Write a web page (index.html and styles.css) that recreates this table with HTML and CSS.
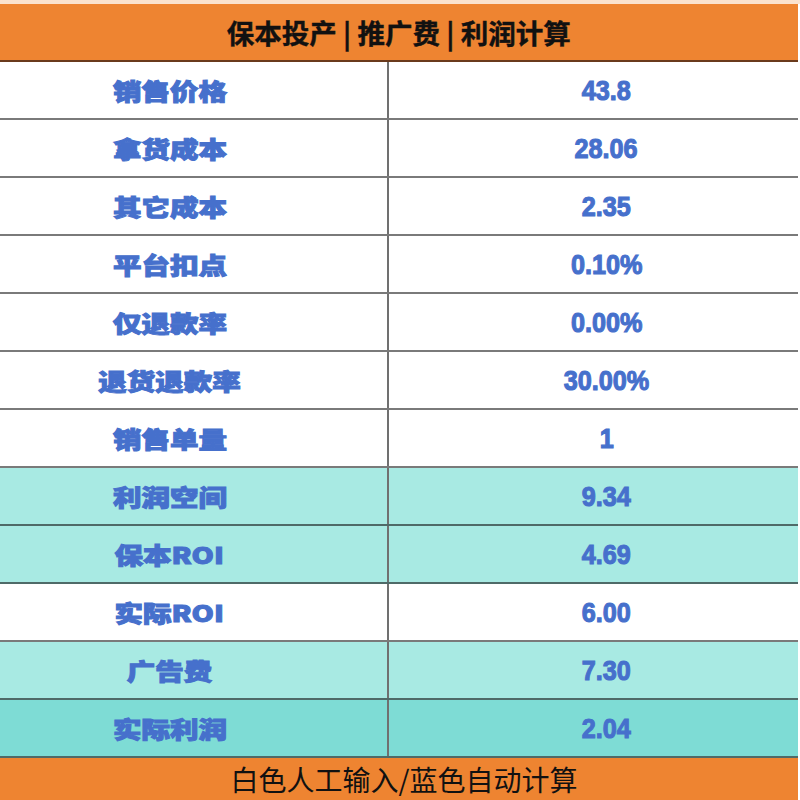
FILE: index.html
```html
<!DOCTYPE html>
<html lang="zh">
<head>
<meta charset="utf-8">
<title>保本投产 | 推广费 | 利润计算</title>
<link rel="stylesheet" href="styles.css">
</head>
<body>
<div class="page">
  <div class="strip"></div>
  <div class="title"><span>保本投产 | 推广费 | 利润计算</span></div>
  <div class="table">
    <div class="row"><div class="label"><span>销售价格</span></div><div class="value"><span>43.8</span></div></div>
    <div class="row"><div class="label"><span>拿货成本</span></div><div class="value"><span>28.06</span></div></div>
    <div class="row"><div class="label"><span>其它成本</span></div><div class="value"><span>2.35</span></div></div>
    <div class="row"><div class="label"><span>平台扣点</span></div><div class="value"><span>0.10%</span></div></div>
    <div class="row"><div class="label"><span>仅退款率</span></div><div class="value"><span>0.00%</span></div></div>
    <div class="row"><div class="label"><span>退货退款率</span></div><div class="value"><span>30.00%</span></div></div>
    <div class="row"><div class="label"><span>销售单量</span></div><div class="value"><span>1</span></div></div>
    <div class="row calc"><div class="label"><span>利润空间</span></div><div class="value"><span>9.34</span></div></div>
    <div class="row calc"><div class="label"><span>保本ROI</span></div><div class="value"><span>4.69</span></div></div>
    <div class="row"><div class="label"><span>实际ROI</span></div><div class="value"><span>6.00</span></div></div>
    <div class="row calc"><div class="label"><span>广告费</span></div><div class="value"><span>7.30</span></div></div>
    <div class="row result"><div class="label"><span>实际利润</span></div><div class="value"><span>2.04</span></div></div>
  </div>
  <div class="footer"><span>白色人工输入/蓝色自动计算</span></div>
</div>
</body>
</html>
```

FILE: styles.css
```css
html, body {
  margin: 0;
  padding: 0;
  background: #ffffff;
}
.page {
  width: 800px;
  height: 800px;
  overflow: hidden;
  display: flex;
  flex-direction: column;
}
.strip {
  flex-shrink: 0;
  height: 4px;
  background: #fbe2cd;
}
.title {
  flex-shrink: 0;
  height: 56px;
  background: #ee8431;
  border-bottom: 2px solid #6a3a1c;
  display: flex;
  align-items: center;
  justify-content: center;
  width: 798px;
  font-family: "Noto Sans CJK SC", sans-serif;
  font-weight: 700;
  font-size: 27px;
  color: #111111;
  -webkit-text-stroke: 0.4px #111111;
}
.title span {
  display: inline-block;
  transform: scaleX(1.02);
  margin-top: 1px;
}
.table {
  flex-shrink: 0;
  width: 798px;
  display: flex;
  flex-direction: column;
}
.row {
  flex-shrink: 0;
  height: 56px;
  border-bottom: 2px solid #7a7a7a;
  display: grid;
  grid-template-columns: 389px 1fr;
  background: #ffffff;
}
.row.calc {
  background: #a8eae3;
  border-bottom-color: #4f6a68;
}
.row.result {
  background: #7edcd5;
  border-bottom-color: #4f6a68;
}
.label, .value {
  display: flex;
  align-items: center;
  justify-content: center;
  color: #4670cc;
}
.label {
  border-right: 2px solid #707070;
  padding-right: 48px;
  font-family: "Noto Sans CJK SC", sans-serif;
  font-weight: 900;
  font-size: 23px;
  -webkit-text-stroke: 1px #4670cc;
}
.label span {
  display: inline-block;
  transform: scaleX(1.24);
}
.value {
  padding-left: 26px;
  font-family: "Liberation Sans", Arial, sans-serif;
  font-weight: 700;
  font-size: 28px;
  -webkit-text-stroke: 1.1px #4670cc;
}
.value span {
  display: inline-block;
  transform: scaleX(0.9);
  margin-top: 2px;
}
.footer {
  flex: 1;
  min-height: 0;
  overflow: hidden;
  width: 798px;
  background: #ee8431;
  display: flex;
  justify-content: center;
  align-items: flex-start;
  font-family: "Noto Sans CJK SC", sans-serif;
  font-weight: 400;
  font-size: 28px;
  line-height: 32px;
  color: #111111;
}
.footer span {
  display: inline-block;
  margin-top: 5px;
  padding-left: 10px;
}
```
